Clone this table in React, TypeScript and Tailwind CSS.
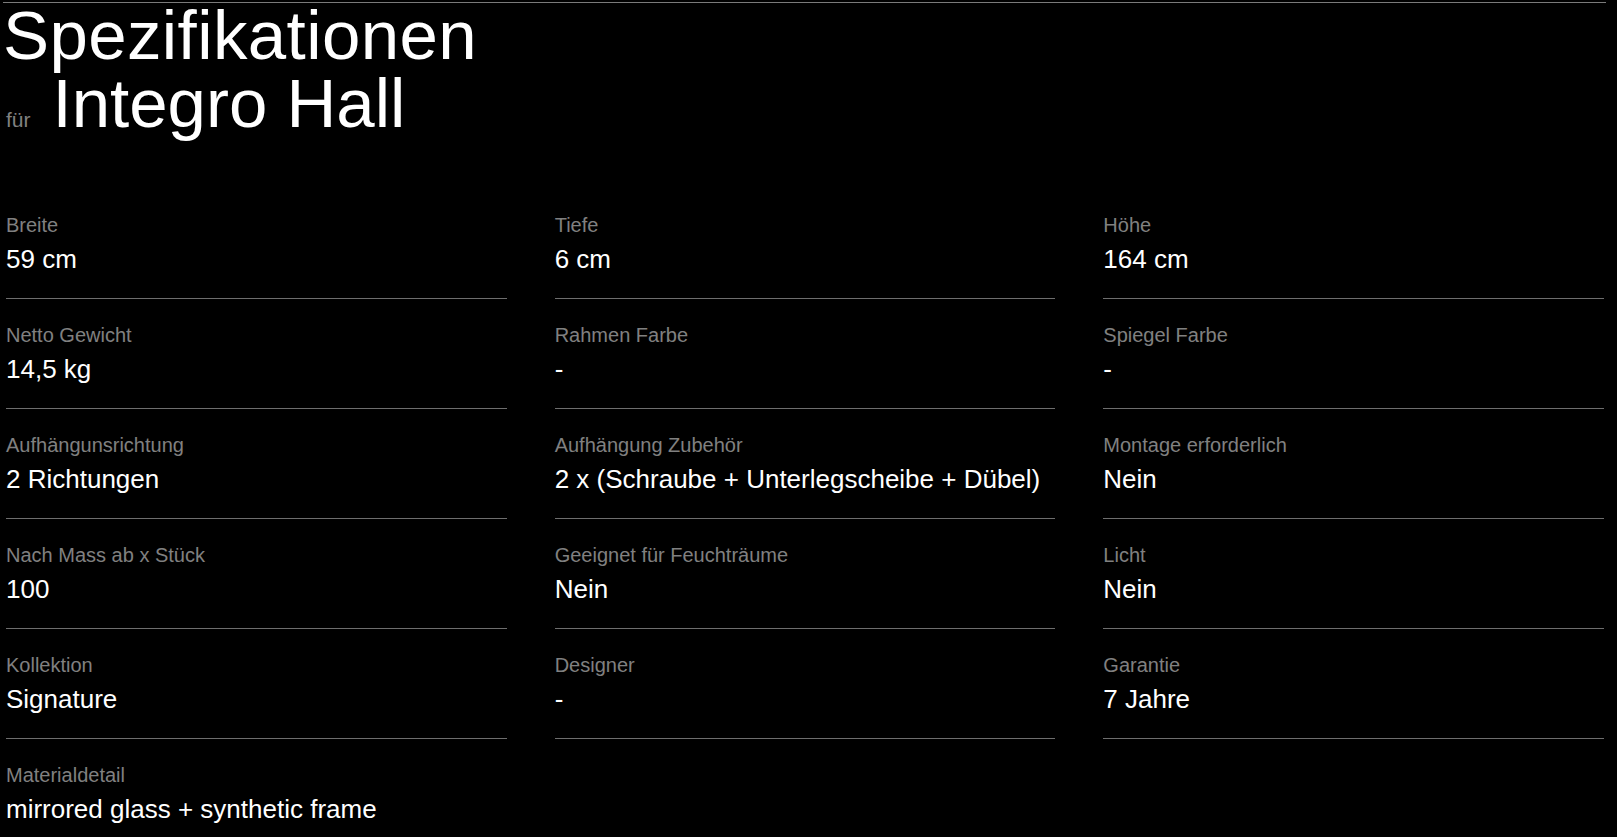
import React from "react";

const specs: [string, string][] = [
  ["Breite", "59 cm"],
  ["Tiefe", "6 cm"],
  ["Höhe", "164 cm"],
  ["Netto Gewicht", "14,5 kg"],
  ["Rahmen Farbe", "-"],
  ["Spiegel Farbe", "-"],
  ["Aufhängunsrichtung", "2 Richtungen"],
  ["Aufhängung Zubehör", "2 x (Schraube + Unterlegscheibe + Dübel)"],
  ["Montage erforderlich", "Nein"],
  ["Nach Mass ab x Stück", "100"],
  ["Geeignet für Feuchträume", "Nein"],
  ["Licht", "Nein"],
  ["Kollektion", "Signature"],
  ["Designer", "-"],
  ["Garantie", "7 Jahre"],
  ["Materialdetail", "mirrored glass + synthetic frame"],
];

export default function App() {
  return (
    <div
      className="min-h-[837px] w-full bg-black text-white overflow-hidden"
      style={{ fontFamily: '"Liberation Sans", Arial, sans-serif' }}
    >
      <div className="pt-[2px] pl-[3px] pr-[11px]">
        <div className="h-px bg-[#7a7a7a]" />
      </div>
      <div className="pl-[3px]">
        <h1 className="text-[69px] leading-[66px] font-normal tracking-[0.4px]">Spezifikationen</h1>
        <div className="flex items-baseline gap-[22px] pl-[3px]">
          <span className="text-[21px] text-[#808080]">für</span>
          <span className="text-[69px] leading-[70px]">Integro Hall</span>
        </div>
      </div>
      <div className="mt-[50px] grid grid-cols-3 gap-x-[48px] pl-[6px] pr-[13px]">
        {specs.map(([label, value], i) => (
          <div
            key={i}
            className={
              "pt-[24px] pb-[23px] " +
              (i < 15 ? "border-b border-[#6e6e6e]" : "")
            }
          >
            <div className="text-[20px] leading-[24px] text-[#808080]">{label}</div>
            <div className="mt-[6px] text-[26px] leading-[32px] text-white">{value}</div>
          </div>
        ))}
      </div>
    </div>
  );
}
